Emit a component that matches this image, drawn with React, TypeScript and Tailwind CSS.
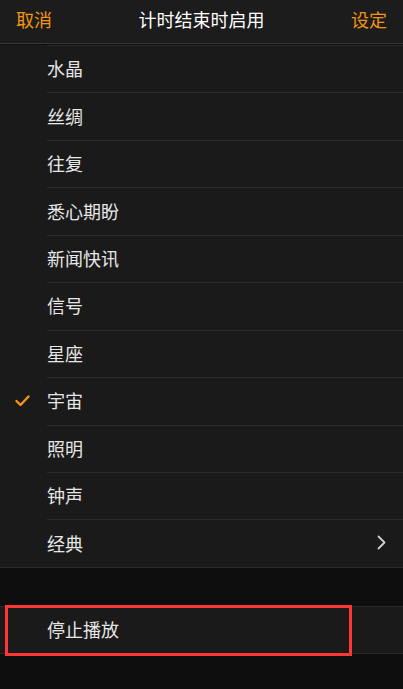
import React from 'react';

const items = ['水晶', '丝绸', '往复', '悉心期盼', '新闻快讯', '信号', '星座', '宇宙', '照明', '钟声', '经典'];

export default function App() {
  const selected = '宇宙';

  return (
    <div
      className="w-[403px] h-[689px] overflow-hidden bg-[#0e0e0e] text-[#e6e6e6]"
      style={{ fontFamily: '"Noto Sans CJK SC", "Noto Sans", sans-serif' }}
    >
      {/* Header */}
      <div className="h-[44px] bg-[#1c1c1c] border-b border-[#383838] flex items-center justify-between px-[16px] pb-[5px]">
        <button className="text-[18px] text-[#f3950f] leading-none">取消</button>
        <h1 className="text-[18px] text-white leading-none">计时结束时启用</h1>
        <button className="text-[18px] text-[#f3950f] leading-none">设定</button>
      </div>

      {/* Sound list */}
      <div className="mt-px bg-[#1a1a1a] border-b border-[#2a2a2a]">
        {items.map((name) => (
          <div key={name} className="flex h-[47.45px]">
            <div className="w-[47px] flex items-center pl-[15px]">
              {name === selected && (
                <svg width="15" height="12" viewBox="0 0 15 12" fill="none">
                  <polyline points="1.5,6 5.5,10 13.5,1.5" stroke="#f3950f" strokeWidth="2.4" strokeLinecap="round" strokeLinejoin="round" />
                </svg>
              )}
            </div>
            <div className="flex-1 border-t border-[#2a2a2a] flex items-center justify-between pr-[17px] pb-[2px]">
              <span className="text-[18px] leading-none">{name}</span>
              {name === '经典' && (
                <svg width="9" height="15" viewBox="0 0 9 15" fill="none">
                  <polyline points="1.5,1.5 7.5,7.5 1.5,13.5" stroke="#cfcfcf" strokeWidth="1.8" strokeLinecap="round" strokeLinejoin="round" />
                </svg>
              )}
            </div>
          </div>
        ))}
      </div>

      {/* Stop playback */}
      <div className="mt-[38px] relative h-[48px] bg-[#1a1a1a] border-y border-[#2a2a2a] flex items-center pl-[47px] pb-[2px]">
        <span className="text-[18px] leading-none">停止播放</span>
        <div className="absolute left-[5px] top-[-2px] w-[347px] h-[51px] border-[3px] border-[#ff3636]" />
      </div>
    </div>
  );
}
